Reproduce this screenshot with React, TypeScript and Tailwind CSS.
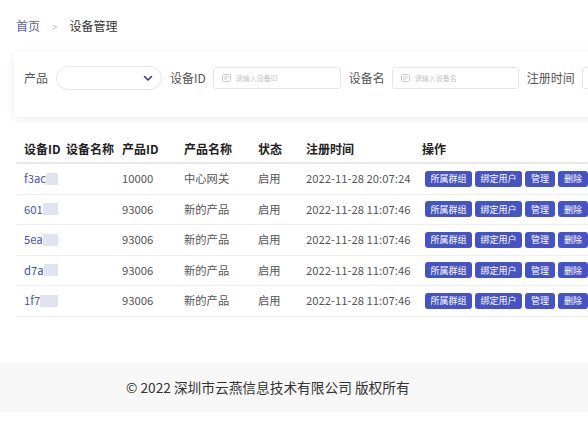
import React from 'react';

const font = { fontFamily: '"Noto Sans CJK SC", "Noto Sans", sans-serif' };

const rows = [
  { id: 'f3ac', pid: '10000', pname: '中心网关', time: '2022-11-28 20:07:24' },
  { id: '601', pid: '93006', pname: '新的产品', time: '2022-11-28 11:07:46' },
  { id: '5ea', pid: '93006', pname: '新的产品', time: '2022-11-28 11:07:46' },
  { id: 'd7a', pid: '93006', pname: '新的产品', time: '2022-11-28 11:07:46' },
  { id: '1f7', pid: '93006', pname: '新的产品', time: '2022-11-28 11:07:46' },
];

const cols = 'grid grid-cols-[42px_56px_62px_74px_48px_116px_200px]';

const IdIcon = () => (
  <svg width="9" height="8" viewBox="0 0 9 8" className="shrink-0">
    <rect x="0.5" y="0.5" width="8" height="7" rx="1" fill="none" stroke="#c8c8c8" />
    <line x1="2" y1="3" x2="7" y2="3" stroke="#c8c8c8" />
    <line x1="2" y1="5" x2="5" y2="5" stroke="#c8c8c8" />
  </svg>
);

const TextInput = ({ placeholder, width }: { placeholder: string; width: string }) => (
  <div className={`${width} h-[22px] border border-[#e6e6e6] rounded-[3px] flex items-center gap-[5px] pl-[8px] shrink-0`}>
    <IdIcon />
    <span className="text-[7px] text-[#c4c4c4]">{placeholder}</span>
  </div>
);

const Btn = ({ label, w }: { label: string; w: string }) => (
  <span className={`${w} h-[16px] rounded-[3px] bg-[#4553c4] text-white text-[9px] flex items-center justify-center shrink-0`}>
    {label}
  </span>
);

export default function App() {
  return (
    <div className="w-[588px] h-[430px] overflow-hidden bg-white text-[#333]" style={font}>
      {/* breadcrumb */}
      <div className="h-[52px] flex items-center pl-[16px] text-[12px]">
        <span className="text-[#5a62aa]">首页</span>
        <span className="mx-[12px] text-[#bbb] text-[10px]">&gt;</span>
        <span className="text-[#333]">设备管理</span>
      </div>

      {/* filters */}
      <div className="ml-[14px] w-[600px] h-[65px] bg-white rounded-[3px] shadow-[0_2px_10px_rgba(0,0,0,0.08)] flex items-start pt-[14px] pl-[10px] text-[12px] text-[#555]">
        <div className="h-[24px] flex items-center">
          <span className="mr-[8px] shrink-0">产品</span>
          <div className="w-[106px] h-[24px] rounded-full border border-[#e6e6e6] flex items-center justify-end pr-[8px] shrink-0">
            <svg width="10" height="7" viewBox="0 0 10 7">
              <path d="M1.5 1.5 L5 5 L8.5 1.5" fill="none" stroke="#2b3a8c" strokeWidth="1.6" strokeLinecap="round" strokeLinejoin="round" />
            </svg>
          </div>
          <span className="ml-[8px] mr-[7px] shrink-0">设备ID</span>
          <TextInput placeholder="请输入设备ID" width="w-[128px]" />
          <span className="ml-[8px] mr-[7px] shrink-0">设备名</span>
          <TextInput placeholder="请输入设备名" width="w-[127px]" />
          <span className="ml-[8px] mr-[7px] shrink-0">注册时间</span>
          <div className="w-[60px] h-[22px] border border-[#e6e6e6] rounded-[3px] shrink-0" />
        </div>
      </div>

      {/* table */}
      <div className="ml-[16px] mt-[19px] w-[620px] text-[11.3px]">
        <div className={`${cols} h-[28px] items-center border-b-2 border-[#e8e8e8] font-bold text-[#222] text-[12px] whitespace-nowrap`}>
          <span className="pl-[8px]">设备ID</span>
          <span className="pl-[8px]">设备名称</span>
          <span className="pl-[8px]">产品ID</span>
          <span className="pl-[8px]">产品名称</span>
          <span className="pl-[8px]">状态</span>
          <span className="pl-[8px]">注册时间</span>
          <span className="pl-[8px]">操作</span>
        </div>
        {rows.map((r, i) => (
          <div key={i} className={`${cols} h-[30.5px] items-center border-b border-[#eeeeee] text-[#555] whitespace-nowrap`}>
            <span className="pl-[8px] flex items-center text-[#4a53a6]">
              {r.id}
              <span className="w-[20px] h-[12px] bg-[#e2e3f0] rounded-[1px]" />
            </span>
            <span />
            <span className="pl-[8px]">{r.pid}</span>
            <span className="pl-[8px]">{r.pname}</span>
            <span className="pl-[8px]">启用</span>
            <span className="pl-[8px]">{r.time}</span>
            <span className="pl-[11px] flex items-center gap-[3px]">
              <Btn label="所属群组" w="w-[47px]" />
              <Btn label="绑定用户" w="w-[47px]" />
              <Btn label="管理" w="w-[30px]" />
              <Btn label="删除" w="w-[30px]" />
            </span>
          </div>
        ))}
      </div>

      {/* footer */}
      <div className="mt-[46px] h-[49px] bg-[#f7f7f7] flex items-center pl-[126px] text-[13.7px] text-[#333]">
        © 2022 深圳市云燕信息技术有限公司 版权所有
      </div>
    </div>
  );
}
